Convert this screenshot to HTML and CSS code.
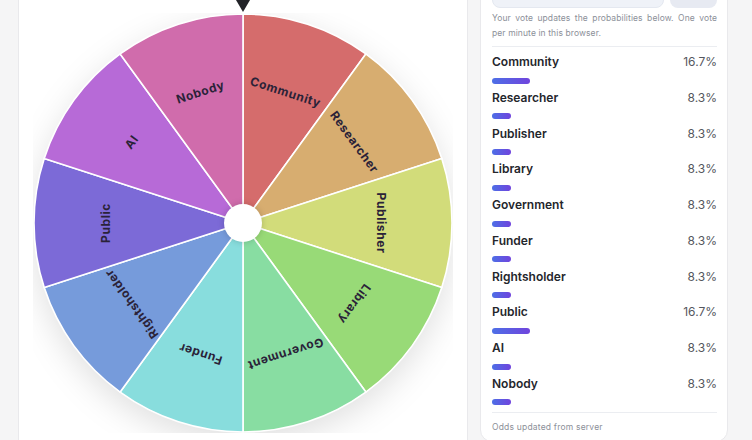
FILE: index.html
```html
<!DOCTYPE html>
<html lang="en">
<head>
<meta charset="utf-8">
<title>Who should decide? — Wheel</title>
<link rel="stylesheet" href="styles.css">
</head>
<body>
<div class="layout">
  <section class="card wheel-card">
    <div class="wheel-wrap">
      <div class="pointer"></div>
      <svg class="wheel" width="420" height="420" viewBox="-210 -210 420 420" xmlns="http://www.w3.org/2000/svg">
        <g class="slices">
          <path d="M0 0 L0 -209 A209 209 0 0 1 122.847 -169.085 Z" fill="hsl(0,56%,63%)"/>
          <path d="M0 0 L122.847 -169.085 A209 209 0 0 1 198.771 -64.585 Z" fill="hsl(36,56%,64%)"/>
          <path d="M0 0 L198.771 -64.585 A209 209 0 0 1 198.771 64.585 Z" fill="hsl(66,58%,67%)"/>
          <path d="M0 0 L198.771 64.585 A209 209 0 0 1 122.847 169.085 Z" fill="hsl(100,57%,66%)"/>
          <path d="M0 0 L122.847 169.085 A209 209 0 0 1 0 209 Z" fill="hsl(138,55%,70%)"/>
          <path d="M0 0 L0 209 A209 209 0 0 1 -122.847 169.085 Z" fill="hsl(180,55%,70%)"/>
          <path d="M0 0 L-122.847 169.085 A209 209 0 0 1 -198.771 64.585 Z" fill="hsl(218,58%,66%)"/>
          <path d="M0 0 L-198.771 64.585 A209 209 0 0 1 -198.771 -64.585 Z" fill="hsl(250,58%,63%)"/>
          <path d="M0 0 L-198.771 -64.585 A209 209 0 0 1 -122.847 -169.085 Z" fill="hsl(282,58%,63%)"/>
          <path d="M0 0 L-122.847 -169.085 A209 209 0 0 1 0 -209 Z" fill="hsl(322,52%,62%)"/>
        </g>
        <g class="labels">
          <text transform="rotate(18) translate(0,-138)">Community</text>
          <text transform="rotate(54) translate(0,-138)">Researcher</text>
          <text transform="rotate(90) translate(0,-138)">Publisher</text>
          <text transform="rotate(126) translate(0,-138)">Library</text>
          <text transform="rotate(162) translate(0,-138)">Government</text>
          <text transform="rotate(198) translate(0,-138)">Funder</text>
          <text transform="rotate(234) translate(0,-138)">Rightsholder</text>
          <text transform="rotate(270) translate(0,-138)">Public</text>
          <text transform="rotate(306) translate(0,-138)">AI</text>
          <text transform="rotate(342) translate(0,-138)">Nobody</text>
        </g>
        <circle class="hub" cx="0" cy="0" r="19"/>
      </svg>
    </div>
  </section>

  <aside class="card odds-card">
    <div class="vote-row">
      <div class="vote-input"></div>
      <div class="vote-btn"></div>
    </div>
    <p class="note">Your vote updates the probabilities below. One vote per minute in this browser.</p>
    <div class="divider"></div>
    <ul class="odds">
      <li class="odd"><div class="odd-head"><span class="odd-name">Community</span><span class="odd-pct">16.7%</span></div><div class="bar" style="width:16.7%"></div></li>
      <li class="odd"><div class="odd-head"><span class="odd-name">Researcher</span><span class="odd-pct">8.3%</span></div><div class="bar" style="width:8.3%"></div></li>
      <li class="odd"><div class="odd-head"><span class="odd-name">Publisher</span><span class="odd-pct">8.3%</span></div><div class="bar" style="width:8.3%"></div></li>
      <li class="odd"><div class="odd-head"><span class="odd-name">Library</span><span class="odd-pct">8.3%</span></div><div class="bar" style="width:8.3%"></div></li>
      <li class="odd"><div class="odd-head"><span class="odd-name">Government</span><span class="odd-pct">8.3%</span></div><div class="bar" style="width:8.3%"></div></li>
      <li class="odd"><div class="odd-head"><span class="odd-name">Funder</span><span class="odd-pct">8.3%</span></div><div class="bar" style="width:8.3%"></div></li>
      <li class="odd"><div class="odd-head"><span class="odd-name">Rightsholder</span><span class="odd-pct">8.3%</span></div><div class="bar" style="width:8.3%"></div></li>
      <li class="odd"><div class="odd-head"><span class="odd-name">Public</span><span class="odd-pct">16.7%</span></div><div class="bar" style="width:16.7%"></div></li>
      <li class="odd"><div class="odd-head"><span class="odd-name">AI</span><span class="odd-pct">8.3%</span></div><div class="bar" style="width:8.3%"></div></li>
      <li class="odd"><div class="odd-head"><span class="odd-name">Nobody</span><span class="odd-pct">8.3%</span></div><div class="bar" style="width:8.3%"></div></li>
    </ul>
    <div class="divider divider-bottom"></div>
    <p class="note footer-note">Odds updated from server</p>
  </aside>
</div>
</body>
</html>
```

FILE: styles.css
```css
* { box-sizing: border-box; }

html, body {
  margin: 0;
  padding: 0;
  background: #f5f5f6;
  font-family: Inter, "Noto Sans", "Liberation Sans", sans-serif;
  overflow: hidden;
}

.layout {
  display: flex;
  align-items: flex-start;
  gap: 12px;
  padding-left: 18px;
  margin-top: -39px;
}

.card {
  background: #ffffff;
  border: 1px solid #e9e9ec;
  border-radius: 12px;
}

.wheel-card {
  width: 450px;
  height: 540px;
  padding-top: 51px;
  display: flex;
  justify-content: center;
}

.wheel-wrap {
  position: relative;
  width: 420px;
  height: 420px;
}

.pointer {
  position: absolute;
  left: 50%;
  top: -13px;
  margin-left: -7px;
  width: 0;
  height: 0;
  border-left: 7px solid transparent;
  border-right: 7px solid transparent;
  border-top: 12px solid #222328;
  z-index: 2;
}

.wheel {
  display: block;
}

.slices {
  filter: drop-shadow(0 10px 16px rgba(0, 0, 0, 0.12));
}

.slices path {
  stroke: #ffffff;
  stroke-width: 1.6;
  stroke-linejoin: round;
}

.labels text {
  font-family: Inter, "Noto Sans", "Liberation Sans", sans-serif;
  font-size: 12px;
  font-weight: 700;
  letter-spacing: 0.6px;
  fill: #2a2238;
  text-anchor: middle;
  dominant-baseline: central;
}

.hub {
  fill: #ffffff;
  filter: drop-shadow(0 0 3px rgba(0, 0, 0, 0.18));
}

.odds-card {
  width: 248px;
  padding: 12px 10px 6px 11px;
}

.vote-row {
  display: flex;
  gap: 6px;
}

.vote-input {
  flex: 1;
  height: 34px;
  background: #eff2f8;
  border: 1px solid #e4e8f0;
  border-radius: 8px;
}

.vote-btn {
  width: 47px;
  height: 34px;
  background: #e7eaf2;
  border-radius: 8px;
}

.note {
  margin: 3px 0 0;
  font-size: 8.5px;
  line-height: 14.5px;
  letter-spacing: 0.1px;
  color: #8c9099;
  text-align: justify;
}

.divider {
  height: 1px;
  background: #ebedf1;
  margin-top: 6px;
}

.odds {
  list-style: none;
  margin: 7px 0 0;
  padding: 0;
  display: flex;
  flex-direction: column;
  gap: 6.25px;
}

.odd {
  display: flex;
  flex-direction: column;
  gap: 7.5px;
}

.odd-head {
  display: flex;
  justify-content: space-between;
  align-items: center;
  height: 16px;
  font-size: 12px;
  line-height: 16px;
}

.odd-name {
  font-weight: 600;
  color: #24262c;
}

.odd-pct {
  color: #54575e;
}

.bar {
  height: 6px;
  border-radius: 3px;
  background: linear-gradient(90deg, #4d6fe6, #7044dd);
}

.divider-bottom {
  margin-top: 7px;
}

.footer-note {
  margin-top: 7px;
  letter-spacing: 0.2px;
}
```
